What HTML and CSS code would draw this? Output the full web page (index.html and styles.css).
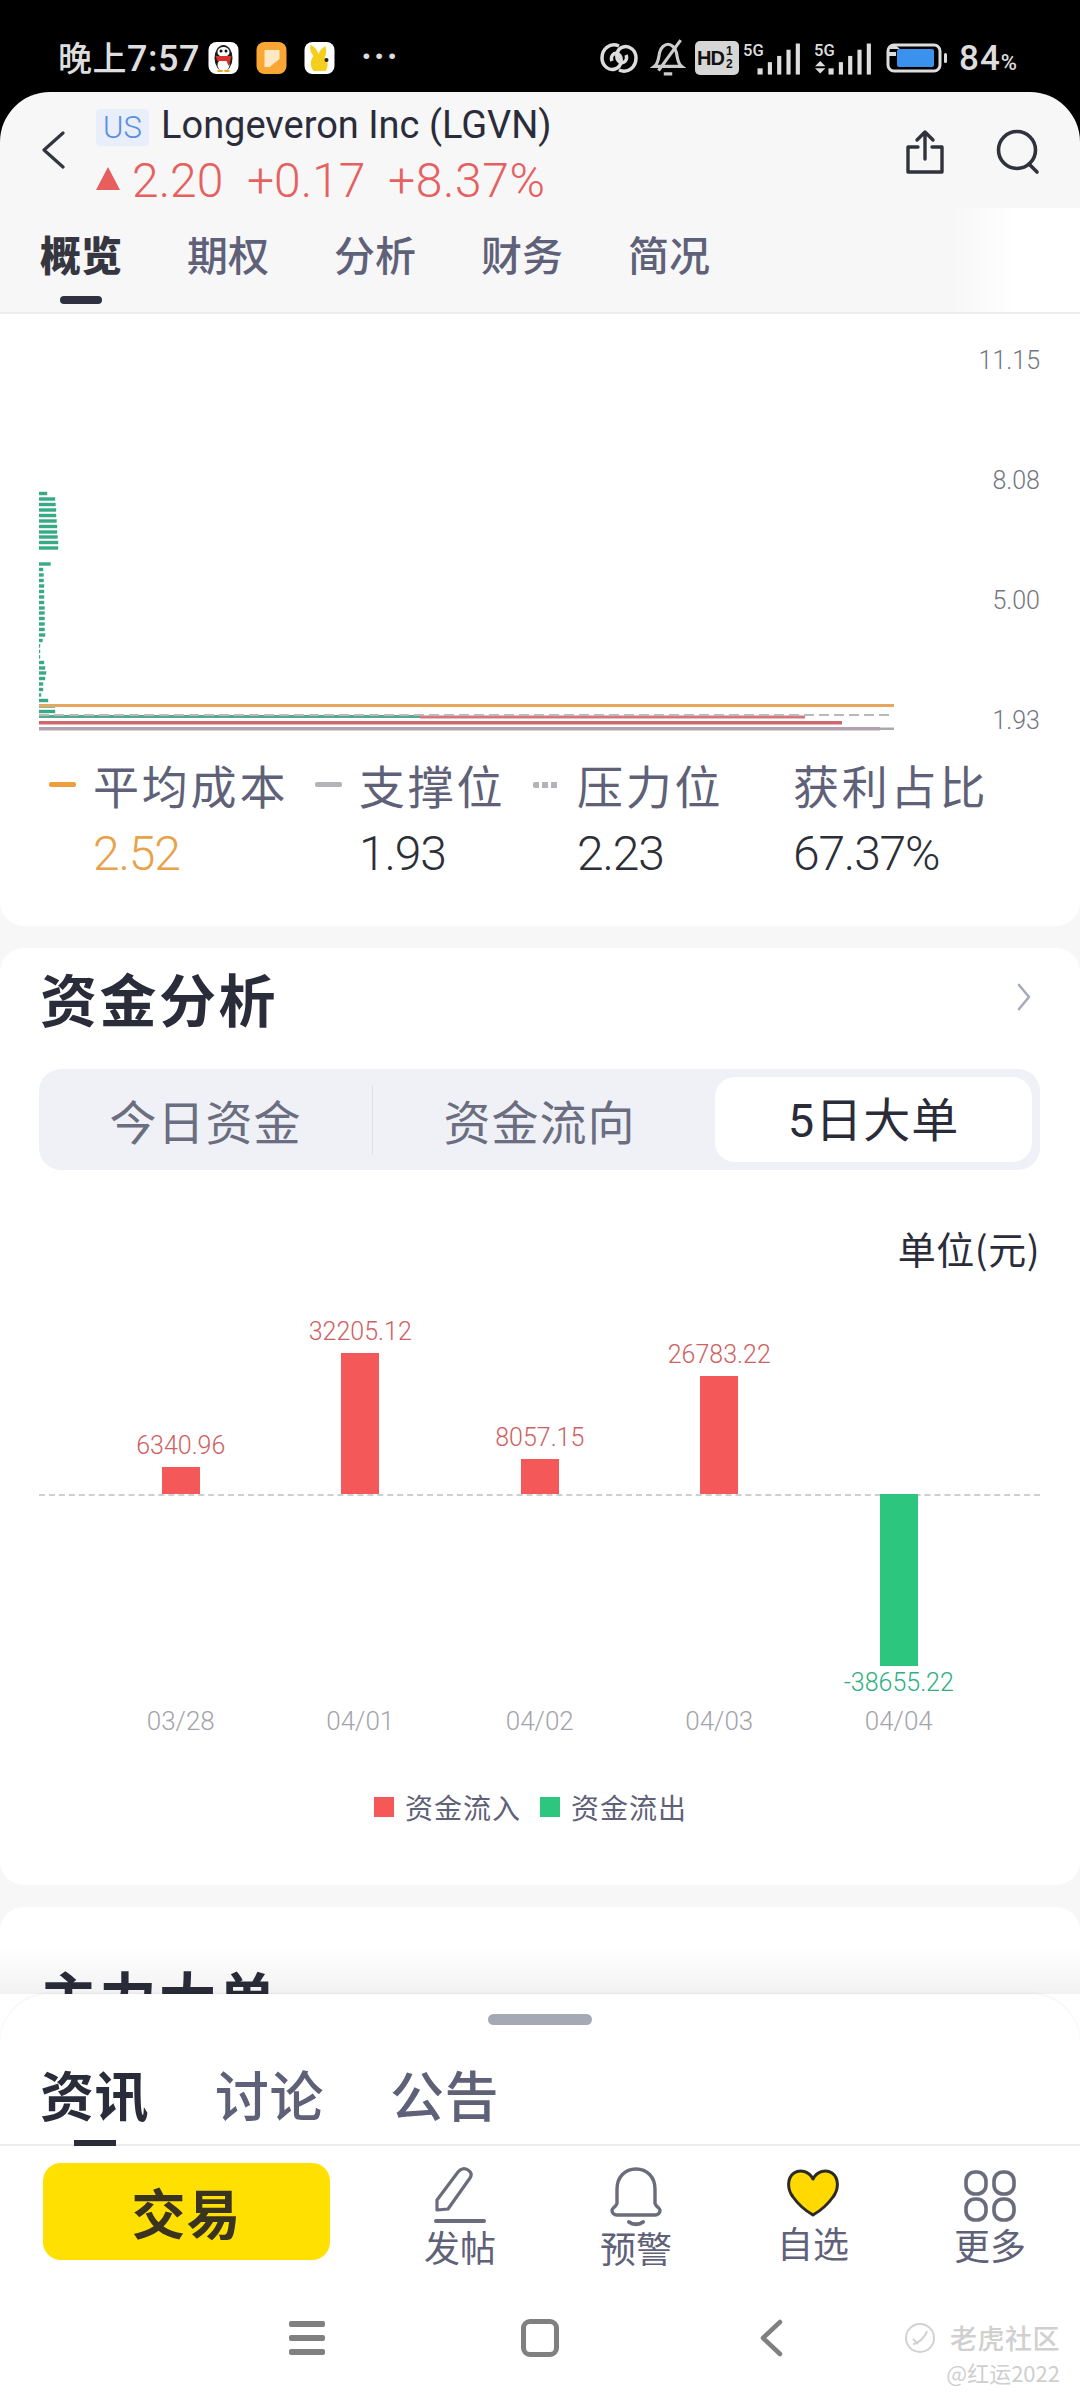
FILE: index.html
```html
<!DOCTYPE html>
<html lang="zh-CN">
<head>
<meta charset="utf-8">
<title>Longeveron Inc (LGVN)</title>
<link rel="stylesheet" href="styles.css">
</head>
<body>
<div class="screen">
  <div class="status">
    <span class="clock"><span class="cn">晚上</span>7:57</span>
    <svg class="app" viewBox="0 0 30 32"><rect width="30" height="32" rx="8" fill="#fff"/><ellipse cx="15" cy="16" rx="9" ry="13" fill="#1c1c1c"/><ellipse cx="15" cy="23" rx="6" ry="6" fill="#fff"/><ellipse cx="15" cy="10" rx="6" ry="5" fill="#fff"/><circle cx="12.5" cy="9" r="1.5" fill="#111"/><circle cx="17.5" cy="9" r="1.5" fill="#111"/><path d="M7 14h16l-1 4-2 6-2-5H9z" fill="#d8332a"/><path d="M9 30h5v-2H9zM16 30h5v-2h-5z" fill="#f2a51e"/></svg>
    <svg class="app" viewBox="0 0 30 32"><rect width="30" height="32" rx="8" fill="#f9a634"/><path d="M8 8h15v9L13 25H8z" fill="#ffe9c4"/></svg>
    <svg class="app" viewBox="0 0 30 32"><rect width="30" height="32" rx="8" fill="#fff"/><path d="M6 3c5 2 7 6 8 9 1-3 3-6 7-8 1 6 1 8-1 11 4 4 4 10 1 14H9C5 24 6 17 9 14 6 11 5 7 6 3z" fill="#f6ce1d"/><circle cx="22" cy="18" r="2" fill="#222"/></svg>
    <span class="dots">···</span>
    <span class="status-right">
      <svg class="si-link" viewBox="0 0 38 32" fill="none" stroke="#ddd" stroke-width="3.5"><path d="M19 4c-9-4-17 3-17 12 0 8 7 13 13 11 7-2 8-12 3-15-4-2-8 2-6 7"/><path d="M19 28c9 4 17-3 17-12 0-8-7-13-13-11-7 2-8 12-3 15 4 2 8-2 6-7"/></svg>
      <svg class="si-bell" viewBox="0 0 34 36" fill="none" stroke="#ccc" stroke-width="3"><path d="M4 26c4-3 4-8 5-13 1-5 5-8 8-8s7 3 8 8c1 5 1 10 5 13z"/><path d="M13 33h8M8 30 29 1"/></svg>
      <span class="si-hd"><b>HD</b><i>1<br>2</i></span>
      <svg class="si-sig" viewBox="0 0 58 32"><g fill="#ddd"><rect x="14" y="26" width="5" height="6"/><rect x="24" y="20" width="4" height="12"/><rect x="33" y="14" width="4" height="18"/><rect x="42" y="8" width="4" height="24"/><rect x="51" y="2" width="4" height="30"/></g><text x="0" y="14" class="si-5g">5G</text></svg>
      <svg class="si-sig" viewBox="0 0 58 32"><g fill="#ddd"><rect x="14" y="26" width="5" height="6"/><rect x="24" y="20" width="4" height="12"/><rect x="33" y="14" width="4" height="18"/><rect x="42" y="8" width="4" height="24"/><rect x="51" y="2" width="4" height="30"/><path d="M1 24h10l-5-5zM1 26h10l-5 5z"/></g><text x="0" y="14" class="si-5g">5G</text></svg>
      <svg class="si-bat" viewBox="0 0 64 32"><rect x="3" y="3" width="52" height="26" rx="6" fill="none" stroke="#ddd" stroke-width="3"/><rect x="12" y="7" width="37" height="18" rx="2" fill="#3a92ee"/><rect x="59" y="11" width="3" height="10" rx="1.5" fill="#ddd"/><path d="M3 7l6-5 6 5zM3 10h8v4H3z" fill="#ddd"/></svg>
      <span class="batt">84<small>%</small></span>
    </span>
  </div>

  <div class="page">
    <header class="head">
      <svg class="back" viewBox="0 0 24 38" fill="none" stroke="#33353f" stroke-width="3.2" stroke-linecap="round" stroke-linejoin="round"><path d="M22 2 3 19l19 17"/></svg>
      <div class="head-info">
        <div class="name-row"><span class="badge">US</span><span class="name">Longeveron Inc (LGVN)</span></div>
        <div class="quote-row"><span class="tri"></span><span class="q1">2.20</span><span class="q2">+0.17</span><span class="q3">+8.37%</span></div>
      </div>
      <svg class="head-ico" viewBox="0 0 42 46" fill="none" stroke="#30323c" stroke-width="3.4" stroke-linecap="round" stroke-linejoin="round"><path d="M14 18H4v25h34V18H28"/><path d="M21 30V3M13 11l8-8 8 8"/></svg>
      <svg class="head-ico search" viewBox="0 0 44 46" fill="none" stroke="#30323c" stroke-width="3.6" stroke-linecap="round"><circle cx="21" cy="21" r="18.5"/><path d="m33 35 8 8"/></svg>
    </header>
    <nav class="tabs">
      <span class="tab on">概览</span><span class="tab">期权</span><span class="tab">分析</span><span class="tab">财务</span><span class="tab">简况</span>
    </nav>

    <section class="chip-card">
      <div class="chip-plot">
        <svg class="chips" viewBox="0 0 1000 400">
          <g class="chip-rows">
            <rect x="0" y="178" width="8" height="3"/><rect x="0" y="183.5" width="16" height="3"/><rect x="0" y="189" width="16.5" height="3"/><rect x="0" y="194.5" width="17" height="3"/><rect x="0" y="200" width="17" height="3"/><rect x="0" y="205.5" width="17.5" height="3"/><rect x="0" y="211" width="18" height="3"/><rect x="0" y="216.5" width="18" height="3"/><rect x="0" y="221.5" width="18.5" height="3"/><rect x="0" y="227" width="19" height="3"/><rect x="0" y="232.5" width="19" height="3"/>
            <rect x="0" y="248.5" width="11.5" height="3"/><rect x="0" y="254" width="4" height="3"/><rect x="0" y="259.5" width="4.5" height="3"/><rect x="0" y="265" width="4.5" height="3"/><rect x="0" y="270.5" width="5" height="3"/><rect x="0" y="276" width="5" height="3"/><rect x="0" y="281.5" width="5" height="3"/><rect x="0" y="287" width="5" height="3"/><rect x="0" y="292.5" width="5.5" height="3"/><rect x="0" y="297.5" width="5.5" height="3"/><rect x="0" y="303" width="5.5" height="3"/><rect x="0" y="308.5" width="5.5" height="3"/><rect x="0" y="314" width="5.5" height="3"/><rect x="0" y="319.5" width="6" height="3"/><rect x="0" y="325" width="3.5" height="3"/><rect x="0" y="330.5" width="1" height="3"/><rect x="0" y="336" width="1" height="3"/><rect x="0" y="341.5" width="1" height="3"/><rect x="0" y="347" width="5" height="3"/><rect x="0" y="352.5" width="6" height="3"/><rect x="0" y="357.5" width="7" height="3"/><rect x="0" y="363" width="6" height="3"/><rect x="0" y="368.5" width="4" height="3"/><rect x="0" y="374" width="4" height="3"/><rect x="0" y="379.5" width="2" height="3"/><rect x="0" y="385" width="9" height="3"/><rect x="0" y="390.5" width="16" height="3"/><rect x="0" y="396" width="16" height="3"/>
          </g>
        </svg>
        <svg class="chip-lines" viewBox="0 0 860 32">
          <rect x="0" y="0" width="855" height="3" fill="#e8a75c"/>
          <rect x="0" y="11" width="381" height="3" fill="#5aa88c"/>
          <rect x="381" y="11.5" width="385" height="3" fill="#d3777a"/>
          <path d="M0 11h853" stroke="#b9b9be" stroke-width="2" stroke-dasharray="10 5" fill="none"/>
          <rect x="0" y="17" width="803" height="3.5" fill="#cf6a6c"/>
          <rect x="0" y="23" width="841" height="3.5" fill="#b3a3b0"/>
          <rect x="841" y="23.5" width="14" height="2.5" fill="#aaa"/>
        </svg>
        <div class="axis"><span>11.15</span><span>8.08</span><span>5.00</span><span>1.93</span></div>
      </div>
      <div class="chip-legend">
        <div class="cl cl1"><i class="mark orange"></i><span class="cl-t">平均成本</span><span class="cl-v orange-t">2.52</span></div>
        <div class="cl cl2"><i class="mark gray"></i><span class="cl-t">支撑位</span><span class="cl-v">1.93</span></div>
        <div class="cl cl3"><i class="mark dash"></i><span class="cl-t">压力位</span><span class="cl-v">2.23</span></div>
        <div class="cl cl4"><span class="cl-t">获利占比</span><span class="cl-v">67.37%</span></div>
      </div>
    </section>

    <section class="fund-card">
      <div class="fund-head">
        <h2 class="fund-title">资金分析</h2>
        <svg class="chev" viewBox="0 0 14 28" fill="none" stroke="#a8abb8" stroke-width="2.6" stroke-linecap="round" stroke-linejoin="round"><path d="m2 2 10 12L2 26"/></svg>
      </div>
      <div class="seg">
        <span class="seg-item">今日资金</span><i class="seg-div"></i><span class="seg-item">资金流向</span><span class="seg-item sel"><span class="seg-num">5</span>日大单</span>
      </div>
      <div class="unit">单位(元)</div>
      <div class="bars">
        <div class="col"><div class="up"><span class="val red">6340.96</span><i class="bar b1"></i></div><div class="down"></div></div>
        <div class="col"><div class="up"><span class="val red">32205.12</span><i class="bar b2"></i></div><div class="down"></div></div>
        <div class="col"><div class="up"><span class="val red">8057.15</span><i class="bar b3"></i></div><div class="down"></div></div>
        <div class="col"><div class="up"><span class="val red">26783.22</span><i class="bar b4"></i></div><div class="down"></div></div>
        <div class="col"><div class="up"></div><div class="down"><i class="bar b5"></i><span class="val green">-38655.22</span></div></div>
      </div>
      <div class="dates"><span>03/28</span><span>04/01</span><span>04/02</span><span>04/03</span><span>04/04</span></div>
      <div class="bar-legend"><i class="sq sq-r"></i><span>资金流入</span><i class="sq sq-g"></i><span>资金流出</span></div>
    </section>

    <section class="main-card"><h2 class="fund-title">主力大单</h2></section>
  </div>

  <div class="sheet">
    <div class="handle"></div>
    <div class="sheet-tabs"><span class="st on">资讯</span><span class="st">讨论</span><span class="st">公告</span></div>
    <div class="toolbar">
      <span class="trade">交易</span>
      <div class="tool t1">
        <svg viewBox="0 0 52 56" fill="none" stroke="#6a6c7c" stroke-width="3.2" stroke-linejoin="round" stroke-linecap="round"><path d="M3 43V33L24 5c3-4 7-4 10-2 3 2 4 5 2 8L14 42z"/><path d="M2 54h48" stroke-width="4"/></svg>
        <span>发帖</span>
      </div>
      <div class="tool t2">
        <svg viewBox="0 0 52 60" fill="none" stroke="#6a6c7c" stroke-width="3.4" stroke-linecap="round" stroke-linejoin="round"><path d="M7 36V22C7 10 15 2 26 2s19 8 19 20v14c0 3 5 5 5 7 0 3-2 5-5 5H7c-3 0-5-2-5-5 0-2 5-4 5-7z"/><path d="M19 55c4 3 10 3 14 0" stroke-width="4"/></svg>
        <span>预警</span>
      </div>
      <div class="tool t3">
        <svg viewBox="0 0 52 48" stroke="#2b2a26" stroke-width="3" stroke-linejoin="round"><path d="M26 10C22 2 13 0 7 4 0 9 0 20 6 28c5 7 13 14 20 18 7-4 15-11 20-18 6-8 6-19-1-24-6-4-15-2-19 6z" fill="#ffd900"/></svg>
        <span>自选</span>
      </div>
      <div class="tool t4">
        <svg viewBox="0 0 52 52" fill="none" stroke="#6a6c7c" stroke-width="3.6"><rect x="2" y="2" width="20" height="22" rx="9"/><rect x="30" y="2" width="20" height="22" rx="9"/><rect x="2" y="29" width="20" height="21" rx="9"/><rect x="30" y="29" width="20" height="21" rx="9"/></svg>
        <span>更多</span>
      </div>
    </div>
    <div class="navbar">
      <span class="burger"><i></i><i></i><i></i></span>
      <span class="home"></span>
      <svg class="nav-back" viewBox="0 0 24 38" fill="none" stroke="#808080" stroke-width="4.5" stroke-linecap="round" stroke-linejoin="round"><path d="M21 3 4 19l17 16"/></svg>
    </div>
    <div class="mark-wm">
      <div class="wm1"><svg viewBox="0 0 32 32" fill="none" stroke="#d2d2d2" stroke-width="2"><circle cx="16" cy="16" r="14"/><path d="M9 22c4 0 12-6 14-13M9 17l5 5"/></svg>老虎社区</div>
      <div class="wm2">@红运2022</div>
    </div>
  </div>
</div>
</body>
</html>
```

FILE: styles.css
```css
* { box-sizing: border-box; }
html, body { margin: 0; padding: 0; }
body { width: 1080px; height: 2400px; overflow: hidden; font-family: "Noto Sans CJK SC", Roboto, sans-serif; }
i { display: block; font-style: normal; }
.screen { position: relative; width: 1080px; height: 2400px; overflow: hidden; background: #000; }

/* status bar */
.status { height: 92px; padding: 24px 58px 0; display: flex; align-items: center; color: #ddd; }
.clock { font: 500 36px/1 Roboto, sans-serif; letter-spacing: .5px; width: 150px; white-space: nowrap; color: #dedede; }
.cn { font-family: "Noto Sans CJK SC", sans-serif; font-size: 34px; }
.app { width: 31px; height: 32px; margin-right: 17px; }
.dots { font: 700 36px/1 Roboto, sans-serif; letter-spacing: 2px; margin-left: 9px; color: #ddd; position: relative; top: -1px; }
.status-right { margin-left: auto; display: flex; align-items: center; height: 36px; position: relative; left: -3px; }
.si-link { width: 40px; height: 32px; margin-right: 11px; }
.si-bell { width: 36px; height: 38px; margin-right: 9px; }
.si-hd { display: flex; align-items: center; width: 44px; height: 34px; background: #d6d6d6; border-radius: 5px; color: #111; padding-left: 2px; margin-right: 4px; }
.si-hd b { font: 700 20px/1 "Liberation Sans", sans-serif; letter-spacing: -1px; }
.si-hd i { font: 700 12px/13px "Liberation Sans", sans-serif; margin-left: 2px; }
.si-sig { width: 60px; height: 34px; margin-right: 11px; }
.si-5g { font: 500 16px Roboto, sans-serif; fill: #ddd; }
.si-bat { width: 64px; height: 32px; margin-right: 10px; }
.batt { font: 500 35px/1 Roboto, sans-serif; letter-spacing: 1px; color: #ddd; width: 60px; white-space: nowrap; }
.batt small { font-size: 22px; }

/* page */
.page { height: 2308px; background: #f7f7f8; border-radius: 50px 50px 0 0; overflow: hidden; }
.head { height: 116px; display: flex; align-items: center; padding: 0 40px 0 42px; position: relative; }
.back { width: 24px; height: 38px; margin-right: 31px; margin-top: 0; margin-left: -1px; }
.head-info { flex: 1; display: flex; flex-direction: column; align-self: flex-start; margin-top: 11px; }
.name-row { display: flex; align-items: center; height: 48px; }
.badge { width: 53px; height: 37px; border-radius: 4px; background: #e8eefa; color: #5b8ede; font: 300 31px/37px Roboto, sans-serif; text-align: center; margin-right: 12px; }
.name { font: 400 38px/1 Roboto, sans-serif; color: #2a2c3a; position: relative; top: -2px; white-space: nowrap; }
.quote-row { display: flex; align-items: center; height: 48px; margin-top: 6px; color: #e66060; font: 300 48px/1 Roboto, sans-serif; }
.tri { width: 0; height: 0; border-left: 12px solid transparent; border-right: 12px solid transparent; border-bottom: 23px solid #e85d5d; margin-right: 12px; position: relative; top: -3px; }
.q1 { width: 115px; }
.q2 { width: 141px; }
.q3 { letter-spacing: .6px; }
.head-ico { width: 42px; height: 46px; margin-top: 4px; }
.search { width: 44px; margin-left: 50px; }
.tabs { height: 106px; display: flex; gap: 67px; padding: 15px 0 0 40px; border-bottom: 2px solid #ececee; background: linear-gradient(90deg, transparent 88%, #fff 94%); }
.tab { position: relative; width: 80px; height: 60px; font: 500 41px/60px "Noto Sans CJK SC", sans-serif; color: #5f6178; white-space: nowrap; }
.tab.on { font-weight: 900; color: #35363f; }
.tab.on::after { content: ""; position: absolute; left: 20px; top: 73px; width: 42px; height: 8px; border-radius: 4px; background: #2f3140; }

/* chip chart */
.chip-card { height: 612px; background: #fff; border-radius: 0 0 24px 24px; }
.chip-plot { position: relative; height: 426px; }
.chips { position: absolute; left: 39px; top: 0; width: 1000px; height: 400px; }
.chip-rows { fill: #38ab85; stroke: #38ab85; stroke-width: .4; }
.chip-lines { position: absolute; left: 39px; top: 390px; width: 860px; height: 32px; }
.axis { position: absolute; right: 40px; top: 29px; height: 396px; display: flex; flex-direction: column; justify-content: space-between; align-items: flex-end; font: 300 25px/36px Roboto, sans-serif; color: #74767f; }
.chip-legend { position: relative; height: 180px; display: grid; grid-template-columns: 266px 218px 216px auto; padding: 14px 0 0 93px; }
.cl { position: relative; display: flex; flex-direction: column; }
.cl-t { font: 400 46px/60px "Noto Sans CJK SC", sans-serif; color: #5f6178; letter-spacing: 2.8px; white-space: nowrap; }
.cl-v { font: 300 48px/60px Roboto, sans-serif; color: #2d2f38; margin-top: 10px; letter-spacing: -1.2px; }
.orange-t { color: #e8a24a; }
.mark { position: absolute; left: -44px; top: 28px; width: 27px; height: 5px; border-radius: 2px; }
.orange { background: #ee9e3e; }
.gray { background: #b3b3b8; }
.dash { background: repeating-linear-gradient(90deg, #b3b3b8 0 6px, transparent 6px 9px); height: 6px; }

/* funds */
.fund-card { height: 937px; margin-top: 22px; background: #fff; border-radius: 24px; padding: 0 40px 0 39px; }
.fund-head { height: 121px; display: flex; align-items: center; justify-content: space-between; padding-bottom: 23px; }
.fund-title { margin: 0; font: 700 57px/1 "Noto Sans CJK SC", sans-serif; color: #2a2c3a; letter-spacing: 2.5px; padding-left: 1px; }
.chev { width: 14px; height: 28px; margin-right: 9px; }
.seg { position: relative; height: 101px; background: #f0f1f6; border-radius: 22px; display: flex; align-items: center; }
.seg-item { width: 333px; text-align: center; font: 400 47px/54px "Noto Sans CJK SC", sans-serif; color: #6b6d80; letter-spacing: 1px; }
.seg-div { width: 1px; height: 70px; background: #dfe0e6; }
.seg-item.sel { margin-left: 9px; width: 317px; height: 85px; line-height: 79px; border-radius: 20px; background: #fff; color: #2a2c3a; }
.seg-num { font: 400 47px/1 Roboto, sans-serif; }
.unit { height: 92px; padding-top: 56px; text-align: right; font: 400 38px/44px "Noto Sans CJK SC", sans-serif; color: #2a2c3a; white-space: nowrap; letter-spacing: .5px; }
.bars { position: relative; display: grid; grid-template-columns: repeat(5, 179.5px); padding-left: 52px; height: 0; }
.bars::after { content: ""; position: absolute; left: 0; top: 232px; width: 1001px; border-top: 2px dashed #cfcfd3; }
.col { display: flex; flex-direction: column; align-items: center; }
.up { height: 232px; display: flex; flex-direction: column; justify-content: flex-end; align-items: center; }
.down { display: flex; flex-direction: column; align-items: center; }
.bar { width: 38px; position: relative; z-index: 1; }
.b1 { height: 27px; background: #f45858; }
.b2 { height: 141px; background: #f45858; }
.b3 { height: 35px; background: #f45858; }
.b4 { height: 118px; background: #f45858; }
.b5 { height: 172px; background: #2cc67e; }
.val { font: 300 25px/30px Roboto, sans-serif; white-space: nowrap; margin-bottom: 6px; }
.red { color: #cf5f63; }
.green { color: #2fae7f; margin: 2px 0 0; }
.dates { display: grid; grid-template-columns: repeat(5, 179.5px); padding-left: 52px; padding-top: 444px; text-align: center; font: 300 26px/30px Roboto, sans-serif; color: #a3a4ac; }
.bar-legend { display: flex; align-items: center; margin-top: 53px; padding-left: 335px; font: 400 28px/36px "Noto Sans CJK SC", sans-serif; color: #5f6178; letter-spacing: 1px; white-space: nowrap; }
.sq { width: 20px; height: 20px; margin-right: 11px; }
.sq-r { background: #f45858; }
.sq-g { background: #2cc67e; margin-left: 19px; }
.main-card { height: 200px; margin-top: 22px; padding: 60px 0 0 39px; background: #fff; border-radius: 24px 24px 0 0; position: relative; }
.main-card::after { content: ""; position: absolute; left: 0; right: 0; top: 40px; height: 47px; background: linear-gradient(#ffffff00, #0000000d); }

/* bottom sheet */
.sheet { position: absolute; left: 0; right: 0; bottom: 0; height: 406px; background: #fff; border-radius: 50px 50px 0 0; box-shadow: 0 -1px 3px #0000000f; }
.handle { width: 104px; height: 11px; margin: 20px auto 0; border-radius: 6px; background: #a5a8b5; }
.sheet-tabs { height: 121px; padding: 36px 0 0 40px; display: flex; gap: 69px; border-bottom: 2px solid #ececee; }
.st { position: relative; width: 106px; font: 500 54px/66px "Noto Sans CJK SC", sans-serif; color: #5f6178; white-space: nowrap; letter-spacing: .5px; }
.st.on { color: #2a2c3a; font-weight: 700; }
.st.on::after { content: ""; position: absolute; left: 34px; top: 79px; width: 42px; height: 6px; background: #2a2c3a; }
.toolbar { height: 137px; padding: 17px 0 0 43px; display: flex; align-items: flex-start; }
.trade { width: 287px; height: 97px; border-radius: 18px; background: #ffe000; text-align: center; font: 700 54px/97px "Noto Sans CJK SC", sans-serif; color: #3a3320; letter-spacing: 1px; }
.tool { display: flex; flex-direction: column; align-items: center; width: 72px; color: #5f6178; font: 400 36px/40px "Noto Sans CJK SC", sans-serif; white-space: nowrap; }
.tool svg { display: block; }
.t1 { margin-left: 94px; }
.t1 svg { width: 52px; height: 56px; margin: 4px 0 3px; }
.t2 { margin-left: 104px; }
.t2 svg { width: 52px; height: 60px; margin: 4px 0 0; }
.t3 { margin-left: 105px; }
.t3 svg { width: 52px; height: 48px; margin: 6px 0 5px; }
.t4 { margin-left: 105px; }
.t4 svg { width: 52px; height: 52px; margin: 7px 0 2px; }
.navbar { display: flex; align-items: center; height: 38px; margin-top: 36px; padding-left: 289px; }
.burger { display: flex; flex-direction: column; justify-content: space-between; width: 36px; height: 34px; }
.burger i { height: 6px; border-radius: 2px; background: #808080; }
.home { width: 38px; height: 38px; margin-left: 196px; border: 5px solid #808080; border-radius: 9px; }
.nav-back { width: 24px; height: 38px; margin-left: 200px; }
.mark-wm { position: absolute; right: 20px; top: 327px; text-align: right; color: #d0d0d0; }
.wm1 { display: flex; align-items: center; font: 500 27px/34px "Noto Sans CJK SC", sans-serif; letter-spacing: .5px; }
.wm1 svg { width: 32px; height: 32px; margin-right: 14px; margin-left: -10px; }
.wm2 { font: 400 22px/26px "Noto Sans CJK SC", sans-serif; margin-top: 4px; color: #cfcfcf; }
```
